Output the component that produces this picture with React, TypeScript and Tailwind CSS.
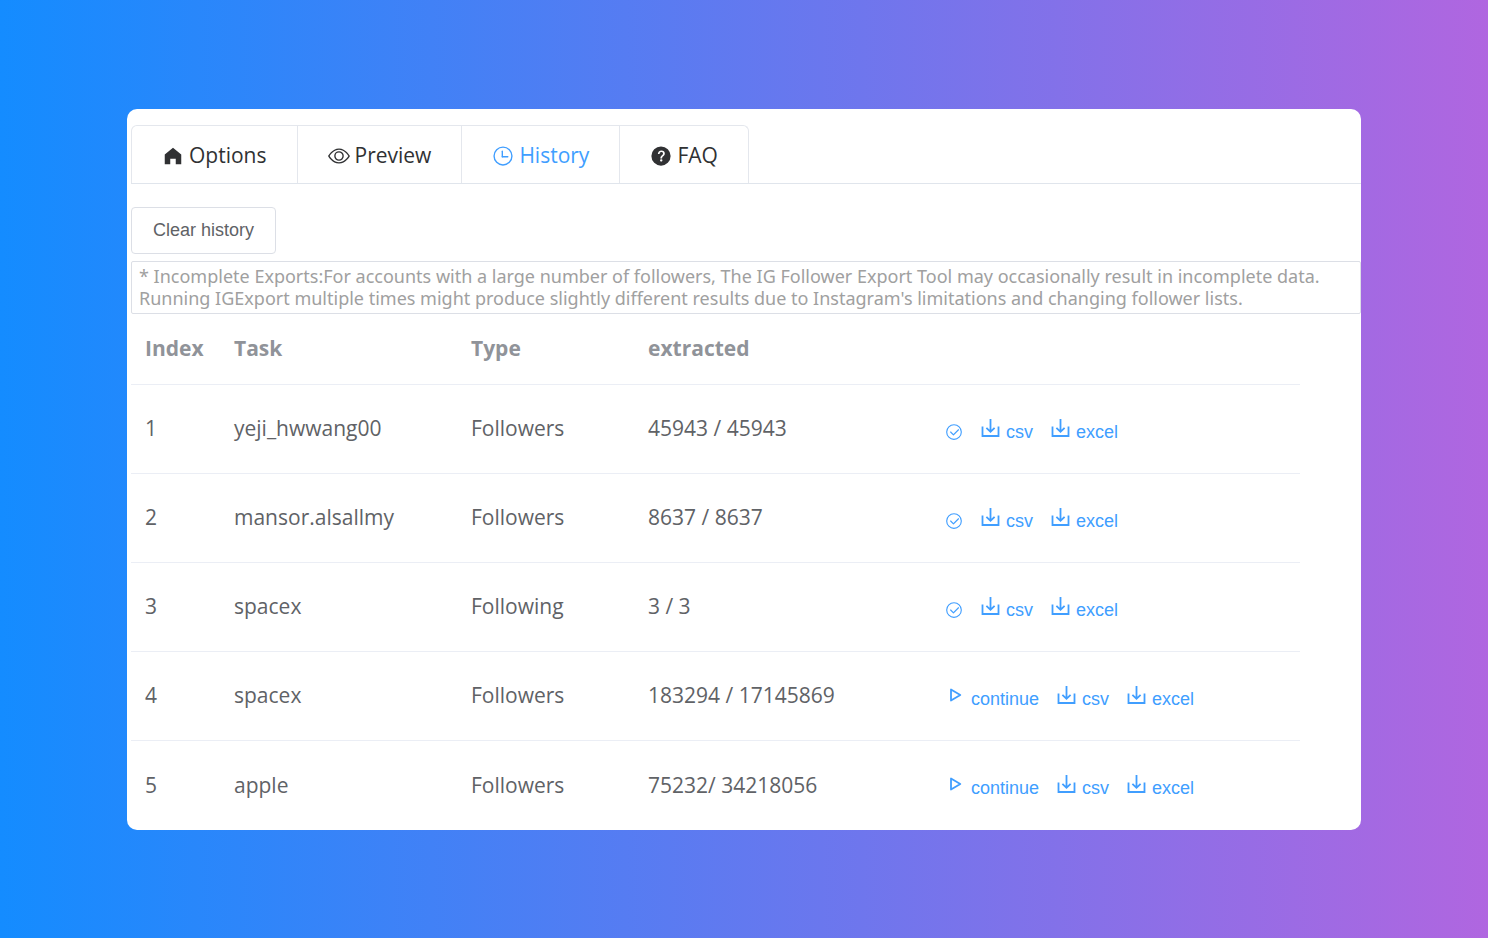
import { useState } from 'react'
import type { ReactNode } from 'react'

type Task = { id:number; name:string; type:string; extracted:string; done:boolean }

const initialTasks: Task[] = [
  { id:1, name:'yeji_hwwang00', type:'Followers', extracted:'45943 / 45943', done:true },
  { id:2, name:'mansor.alsallmy', type:'Followers', extracted:'8637 / 8637', done:true },
  { id:3, name:'spacex', type:'Following', extracted:'3 / 3', done:true },
  { id:4, name:'spacex', type:'Followers', extracted:'183294 / 17145869', done:false },
  { id:5, name:'apple', type:'Followers', extracted:'75232/ 34218056', done:false },
]

function Icon({ className, children }: { className:string; children:ReactNode }) {
  return <svg viewBox="0 0 1024 1024" fill="currentColor" aria-hidden="true" className={`shrink-0 ${className}`}>{children}</svg>
}

const ring='M512 896a384 384 0 1 0 0-768 384 384 0 0 0 0 768m0 64a448 448 0 1 1 0-896 448 448 0 0 1 0 896'

const tabs = [
  { label:'Options', icon:<path d="M512 128 128 447.936V896h255.936V640H640v256h255.936V447.936z" /> },
  { label:'Preview', icon:<path d="M512 160c320 0 512 352 512 352S832 864 512 864 0 512 0 512s192-352 512-352m0 64c-225.28 0-384.128 208.064-436.8 288 52.608 79.872 211.456 288 436.8 288 225.28 0 384.128-208.064 436.8-288-52.608-79.872-211.456-288-436.8-288m0 64a224 224 0 1 1 0 448 224 224 0 0 1 0-448m0 64a160.19 160.19 0 0 0-160 160c0 88.192 71.744 160 160 160s160-71.808 160-160-71.744-160-160-160" /> },
  { label:'History', icon:<><path d={ring} /><path d="M480 256a32 32 0 0 1 32 32v256a32 32 0 0 1-64 0V288a32 32 0 0 1 32-32" /><path d="M480 512h256q32 0 32 32t-32 32H480q-32 0-32-32t32-32" /></> },
  { label:'FAQ', icon:<path d="M512 64a448 448 0 1 1 0 896 448 448 0 0 1 0-896m23.744 191.488c-52.096 0-92.928 14.784-123.2 44.352-30.976 29.568-45.76 70.4-45.76 122.496h80.256c0-29.568 5.632-52.8 17.6-68.992 13.376-19.712 35.2-28.864 66.176-28.864 23.936 0 42.944 6.336 56.32 19.712 12.672 13.376 19.712 31.68 19.712 54.912 0 17.6-6.336 34.496-19.008 49.984l-8.448 9.856c-45.76 40.832-73.216 70.4-82.368 89.408-9.856 19.008-14.08 42.24-14.08 68.992v9.856h80.96v-9.856c0-16.896 3.52-31.68 10.56-45.76 6.336-12.672 15.488-24.64 28.16-35.2 33.792-29.568 54.208-48.576 60.544-55.616 16.896-22.528 26.048-51.392 26.048-86.592 0-42.944-14.08-76.736-42.24-101.376-28.16-25.344-65.472-37.312-111.232-37.312zm-12.672 406.208a54.272 54.272 0 0 0-38.72 14.784 49.408 49.408 0 0 0-15.488 38.016c0 15.488 4.928 28.16 15.488 38.016A54.848 54.848 0 0 0 523.072 768c15.488 0 28.16-4.928 38.72-14.784a51.52 51.52 0 0 0 16.192-38.72 51.968 51.968 0 0 0-15.488-38.016 55.936 55.936 0 0 0-39.424-14.784z" /> },
]

function DownloadButton({ label }: { label:string }) {
  return (
    <button type="button" className="flex items-baseline gap-1.5 hover:opacity-70">
      <svg viewBox="0 0 19 20" fill="none" stroke="currentColor" strokeWidth="1.8" aria-hidden="true" className="h-5 w-[19px] shrink-0">
        <path d="M1.5 8.5v9.5h16V8.5M9.5 1v12.5M5.4 9.8l4.1 4 4.1-4" />
      </svg>
      {label}
    </button>
  )
}

export default function App() {
  const [active,setActive]=useState('History')
  const [tasks,setTasks]=useState<Task[]>(initialTasks)

  return (
    <div className="flex min-h-screen items-center bg-linear-to-r/srgb from-[#148cff] to-[#b066e0] px-[127px] font-['Open_Sans','Noto_Sans',sans-serif]">
      <main className="w-full rounded-[10px] bg-white pt-4 pl-1">
        <nav className="flex border-b border-[#e0e5ec]">
          <div className="flex divide-x divide-[#e4e7ed] rounded-t-md border border-b-0 border-[#e4e7ed]">
            {tabs.map(t=>(
              <button key={t.label} type="button" onClick={()=>setActive(t.label)}
                className={`flex h-[57px] items-center gap-[5px] px-[30px] pt-1 text-[21px] ${active===t.label?'text-[#409eff]':'text-[#303133]'}`}>
                <Icon className="size-[22px]">{t.icon}</Icon>
                {t.label}
              </button>
            ))}
          </div>
        </nav>
        <button type="button" onClick={()=>setTasks([])}
          className="mt-[23px] block h-[47px] rounded border border-[#dcdfe6] px-[21px] font-['Liberation_Sans',sans-serif] text-lg text-[#606266]">
          Clear history
        </button>
        <p className="mt-[7px] rounded-xs border border-[#dcdfe6] px-[7px] pt-[3px] pb-1 font-['Noto_Sans',sans-serif] text-lg leading-[22px] text-[#a0a0a0]">
          * Incomplete Exports:For accounts with a large number of followers, The IG Follower Export Tool may occasionally result in incomplete data. Running IGExport multiple times might produce slightly different results due to Instagram's limitations and changing follower lists.
        </p>
        <table className="w-[95%] table-fixed text-left text-[21px] text-[#606266]">
          <thead>
            <tr className="h-[71px] border-b border-[#ebeef5] text-[#909399]">
              <th className="w-[89px] pl-3.5 font-bold">Index</th>
              <th className="w-[237px] pl-3.5 font-bold">Task</th>
              <th className="w-[177px] pl-3.5 font-bold">Type</th>
              <th className="w-[297px] pl-3.5 font-bold">extracted</th>
              <th aria-label="Actions" />
            </tr>
          </thead>
          <tbody>
            {tasks.map(t=>(
              <tr key={t.id} className="h-[89px] border-b border-[#ebeef5] last:border-b-0">
                <td className="pl-3.5">{t.id}</td>
                <td className="pl-3.5">{t.name}</td>
                <td className="pl-3.5">{t.type}</td>
                <td className="pl-3.5">{t.extracted}</td>
                <td className="pt-1.5 pl-3.5">
                  <div className="flex items-center gap-[18px] font-['Liberation_Sans',sans-serif] text-lg text-[#409eff]">
                    {t.done?(
                      <Icon className="size-[18px]">
                        <path d={ring} />
                        <path d="M745.344 361.344a32 32 0 0 1 45.312 45.312l-288 288a32 32 0 0 1-45.312 0l-160-160a32 32 0 1 1 45.312-45.312L480 626.752z" />
                      </Icon>
                    ):(
                      <button type="button" className="flex items-baseline gap-2 pl-1 hover:opacity-70">
                        <svg viewBox="0 0 14 20" fill="none" stroke="currentColor" strokeWidth="1.8" strokeLinejoin="round" aria-hidden="true" className="h-5 w-3.5">
                          <path d="M2 4.5v11l9.3-5.5z" />
                        </svg>
                        continue
                      </button>
                    )}
                    <DownloadButton label="csv" />
                    <DownloadButton label="excel" />
                  </div>
                </td>
              </tr>
            ))}
          </tbody>
        </table>
      </main>
    </div>
  )
}
